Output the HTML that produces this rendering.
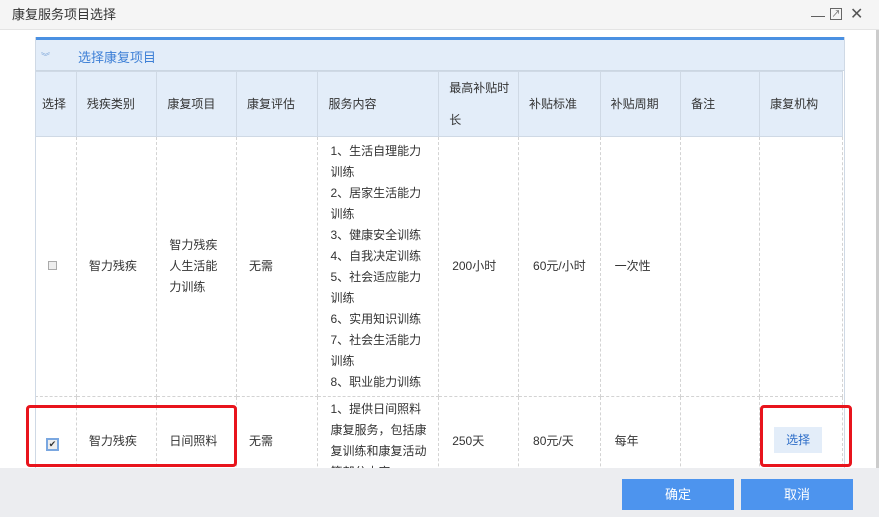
<!DOCTYPE html>
<html><head><meta charset="utf-8"><style>
*{margin:0;padding:0;box-sizing:border-box}
body{width:879px;height:517px;overflow:hidden;background:#fff;font-family:"Liberation Sans","Noto Sans CJK SC",sans-serif;font-size:12px;color:#333;position:relative}
.title{position:absolute;left:0;top:0;width:879px;height:30px;background:#f5f5f5;border-bottom:1px solid #e4e4e4;line-height:29px;padding-left:12px;font-size:13px;color:#333}
.ctl{position:absolute;top:0;height:30px;line-height:30px;font-size:14px;color:#555}
.panel{position:absolute;left:35px;top:37px;width:810px;height:431px;overflow:hidden;border-left:1px solid #cfd9e5;border-right:1px solid #cfd9e5}
.bar{position:absolute;left:0;top:0;width:810px;height:34px;background:#e3edf9;border-top:3px solid #4a90e2;border-bottom:1px solid #cbd6e2}
.bar span{position:absolute;left:42px;top:7px;color:#3d7fd6;font-size:13px}
.bar i{position:absolute;left:5px;top:10px;font-style:normal;color:#7fa7d9;font-size:9px}
table{position:absolute;left:-1px;top:34px;border-collapse:collapse;table-layout:fixed}
td,th{border:1px dashed #d3d3d3;font-weight:normal;text-align:left;padding:0 10px;vertical-align:middle;line-height:21px;word-break:break-all}
th{background:#e3edf9;border:1px solid #cfd9e5;height:64px;color:#333;padding-right:2px;white-space:nowrap}
.foot{position:absolute;left:0;top:468px;width:879px;height:49px;background:#ecedf0}
.btn{position:absolute;top:11px;width:112px;height:31px;background:#4d94ee;color:#fff;text-align:center;line-height:31px;font-size:13px}
.red{position:absolute;border:3px solid #e8141c;border-radius:4px}
.cb{display:inline-block;width:9px;height:9px;border:1px solid #aaa;background:#eee}
</style></head><body>
<div class="title">康复服务项目选择</div>
<div class="ctl" style="left:811px">—</div>
<div class="ctl" style="left:830px;top:8px;width:12px;height:12px;border:1px solid #666;line-height:10px;font-size:9px;text-align:center">↗</div>
<div class="ctl" style="left:850px;font-size:16px">✕</div>
<div style="position:absolute;left:876px;top:30px;width:3px;height:438px;background:#ccc"></div>
<div class="panel">
<div class="bar"><i>︾</i><span>选择康复项目</span></div>
<table>
<colgroup><col style="width:41px"><col style="width:81px"><col style="width:80px"><col style="width:82px"><col style="width:121px"><col style="width:80px"><col style="width:82px"><col style="width:81px"><col style="width:80px"><col style="width:83px"></colgroup>
<tr><th style="padding-left:6px">选择</th><th>残疾类别</th><th>康复项目</th><th>康复评估</th><th>服务内容</th><th style="line-height:32px">最高补贴时<br>长</th><th>补贴标准</th><th>补贴周期</th><th>备注</th><th>康复机构</th></tr>
<tr style="height:260px"><td style="padding-left:12px"><span class="cb"></span></td><td style="padding-left:12px">智力残疾</td><td style="padding:0 12px">智力残疾<br>人生活能<br>力训练</td><td style="padding-left:12px">无需</td><td style="padding:0 4px 0 12px">1、生活自理能力<br>训练<br>2、居家生活能力<br>训练<br>3、健康安全训练<br>4、自我决定训练<br>5、社会适应能力<br>训练<br>6、实用知识训练<br>7、社会生活能力<br>训练<br>8、职业能力训练</td><td style="padding-left:13px">200小时</td><td style="padding-left:14px">60元/小时</td><td style="padding-left:14px">一次性</td><td></td><td></td></tr>
<tr style="height:100px"><td style="padding-left:10px;vertical-align:top;padding-top:36px"><span class="cb" style="width:13px;height:13px;border:2px solid #7aa7e0;font-size:9px;line-height:9px;text-align:center">✔</span></td><td style="vertical-align:top;padding-top:34px;padding-left:12px">智力残疾</td><td style="vertical-align:top;padding-top:34px;padding-left:12px">日间照料</td><td style="vertical-align:top;padding-top:34px;padding-left:12px">无需</td><td style="vertical-align:top;padding:2px 0 0 12px;white-space:nowrap">1、提供日间照料<br>康复服务，包括康<br>复训练和康复活动<br>等部分内容</td><td style="vertical-align:top;padding-top:34px;padding-left:13px">250天</td><td style="vertical-align:top;padding-top:34px;padding-left:14px">80元/天</td><td style="vertical-align:top;padding-top:34px;padding-left:14px">每年</td><td></td><td style="vertical-align:top;padding-top:30px;padding-left:14px"><span style="display:inline-block;width:48px;height:26px;background:#e3edf9;color:#2d6dc8;text-align:center;line-height:26px">选择</span></td></tr>
</table>
</div>
<div class="red" style="left:26px;top:405px;width:211px;height:62px"></div>
<div class="red" style="left:760px;top:405px;width:92px;height:62px"></div>
<div class="foot"><div class="btn" style="left:622px">确定</div><div class="btn" style="left:741px">取消</div></div>
</body></html>
